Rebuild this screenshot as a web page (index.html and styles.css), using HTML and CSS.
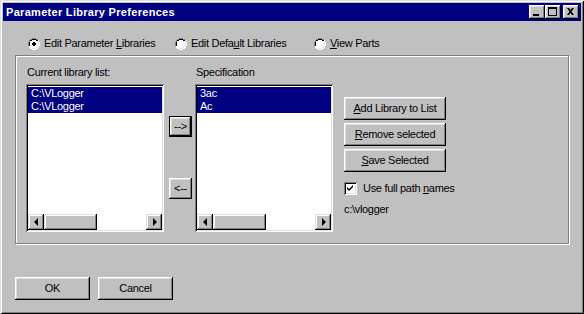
FILE: index.html
```html
<!DOCTYPE html>
<html>
<head>
<meta charset="utf-8">
<link rel="stylesheet" href="styles.css">
</head>
<body>
<div class="window">
  <div class="titlebar">
    <span class="title">Parameter Library Preferences</span>
    <div class="controls">
      <span class="tbtn"><svg width="16" height="14" viewBox="0 0 16 14"><rect x="4" y="9" width="6" height="2" fill="#000"/></svg></span>
      <span class="tbtn"><svg width="16" height="14" viewBox="0 0 16 14"><path d="M3 2h9v9h-9z M4 4v6h7v-6z" fill="#000" fill-rule="evenodd"/></svg></span>
      <span class="tbtn close"><svg width="16" height="14" viewBox="0 0 16 14"><path d="M4 3h2l1.5 2 1.5-2h2l-2.5 3.5 2.5 3.5h-2l-1.5-2-1.5 2h-2l2.5-3.5z" fill="#000"/></svg></span>
    </div>
  </div>

  <div class="radios">
    <label class="radio r1"><span class="rcircle"><svg width="12" height="12" viewBox="0 0 12 12"><path d="M4 0h4v1h2v1h1v2h1v4h-1v2h-1v1h-2v1h-4v-1h-2v-1h-1v-2h-1v-4h1v-2h1v-1h2z" fill="#fff"/><path d="M4 0h4v1h2v1h-2v-1h-4v1h-2v2h-1v4h-1v-4h1v-2h1v-1h2z" fill="#808080"/><path d="M4 1h4v1h2v1h-2v-1h-4v1h-2v1h-0v4h-1v-4h1v-2h2z" fill="#000"/><path d="M4 2h4v1h1v1h1v4h-1v1h-1v1h-4v-1h-1v-1h-1v-4h1v-1h1z" fill="#fff"/><path d="M10 3h1v5h-1v1h-1v1h-1v1h-4v-1h4v-1h1v-1h1z" fill="#dfdfdf"/><path d="M5 4h2v1h1v2h-1v1h-2v-1h-1v-2h1z" fill="#000"/></svg></span><span class="txt">Edit Parameter <u>L</u>ibraries</span></label>
    <label class="radio r2"><span class="rcircle"><svg width="12" height="12" viewBox="0 0 12 12"><path d="M4 0h4v1h2v1h1v2h1v4h-1v2h-1v1h-2v1h-4v-1h-2v-1h-1v-2h-1v-4h1v-2h1v-1h2z" fill="#fff"/><path d="M4 0h4v1h2v1h-2v-1h-4v1h-2v2h-1v4h-1v-4h1v-2h1v-1h2z" fill="#808080"/><path d="M4 1h4v1h2v1h-2v-1h-4v1h-2v1h-0v4h-1v-4h1v-2h2z" fill="#000"/><path d="M4 2h4v1h1v1h1v4h-1v1h-1v1h-4v-1h-1v-1h-1v-4h1v-1h1z" fill="#fff"/><path d="M10 3h1v5h-1v1h-1v1h-1v1h-4v-1h4v-1h1v-1h1z" fill="#dfdfdf"/></svg></span><span class="txt">Edit Defa<u>u</u>lt Libraries</span></label>
    <label class="radio r3"><span class="rcircle"><svg width="12" height="12" viewBox="0 0 12 12"><path d="M4 0h4v1h2v1h1v2h1v4h-1v2h-1v1h-2v1h-4v-1h-2v-1h-1v-2h-1v-4h1v-2h1v-1h2z" fill="#fff"/><path d="M4 0h4v1h2v1h-2v-1h-4v1h-2v2h-1v4h-1v-4h1v-2h1v-1h2z" fill="#808080"/><path d="M4 1h4v1h2v1h-2v-1h-4v1h-2v1h-0v4h-1v-4h1v-2h2z" fill="#000"/><path d="M4 2h4v1h1v1h1v4h-1v1h-1v1h-4v-1h-1v-1h-1v-4h1v-1h1z" fill="#fff"/><path d="M10 3h1v5h-1v1h-1v1h-1v1h-4v-1h4v-1h1v-1h1z" fill="#dfdfdf"/></svg></span><span class="txt"><u>V</u>iew Parts</span></label>
  </div>

  <div class="group">
    <div class="listcol">
      <div class="label">Current library list:</div>
      <div class="listbox">
        <div class="items">
          <div class="item sel">C:\VLogger</div>
          <div class="item sel">C:\VLogger</div>
        </div>
        <div class="hscroll">
          <span class="sbtn"><span class="tri left"></span></span>
          <span class="thumb"></span>
          <span class="track"></span>
          <span class="sbtn"><span class="tri right"></span></span>
        </div>
      </div>
    </div>

    <div class="arrows">
      <button class="btn default arrowbtn">--&gt;</button>
      <button class="btn arrowbtn second">&lt;--</button>
    </div>

    <div class="listcol">
      <div class="label">Specification</div>
      <div class="listbox">
        <div class="items">
          <div class="item sel">3ac</div>
          <div class="item sel">Ac</div>
        </div>
        <div class="hscroll">
          <span class="sbtn"><span class="tri left"></span></span>
          <span class="thumb"></span>
          <span class="track"></span>
          <span class="sbtn"><span class="tri right"></span></span>
        </div>
      </div>
    </div>

    <div class="actions">
      <button class="btn wide"><u>A</u>dd Library to List</button>
      <button class="btn wide"><u>R</u>emove selected</button>
      <button class="btn wide"><u>S</u>ave Selected</button>
      <label class="check"><span class="cbox"><svg width="7" height="7" viewBox="0 0 7 7"><path d="M6 0v2l-4 4-2-2v-2l2 2 4-4z" fill="#000"/></svg></span><span class="txt">Use full path <u>n</u>ames</span></label>
      <div class="path">c:\vlogger</div>
    </div>
  </div>

  <div class="footer">
    <button class="btn foot">OK</button>
    <button class="btn foot">Cancel</button>
  </div>
</div>
</body>
</html>
```

FILE: styles.css
```css
* { box-sizing: border-box; }
html, body { margin: 0; padding: 0; }
body {
  width: 584px;
  height: 314px;
  background: #c0c0c0;
  font-family: "Liberation Sans", Arial, sans-serif;
  font-size: 11px;
  letter-spacing: -0.3px;
  color: #000;
  overflow: hidden;
}
.window {
  width: 584px;
  height: 314px;
  padding: 3px;
  background: #c0c0c0;
  box-shadow: inset 1px 1px #dfdfdf, inset -1px -1px #000, inset 2px 2px #fff, inset -2px -2px #808080;
  display: flex;
  flex-direction: column;
}
.titlebar {
  height: 18px;
  background: #000080;
  display: flex;
  align-items: center;
  justify-content: space-between;
  padding: 0 2px 0 3px;
}
.title {
  color: #fff;
  font-weight: bold;
  font-size: 11px;
  letter-spacing: 0.3px;
  line-height: 13px;
}
.controls { display: flex; align-items: center; }
.tbtn {
  width: 16px;
  height: 14px;
  background: #c0c0c0;
  box-shadow: inset -1px -1px #000, inset 1px 1px #fff, inset -2px -2px #808080, inset 2px 2px #dfdfdf;
  display: block;
}
.tbtn svg { display: block; }
.tbtn.close { margin-left: 2px; }

.radios {
  display: flex;
  padding: 16px 0 0 25px;
  height: 34px;
}
.radio {
  display: flex;
  align-items: center;
  height: 13px;
  line-height: 13px;
  white-space: nowrap;
}
.r1 { width: 147px; }
.r2 { width: 139px; }
.rcircle { width: 12px; height: 12px; margin-right: 4px; display: block; }
.rcircle svg { display: block; }

.group {
  margin: 0 12px;
  height: 189px;
  border: 1px solid #808080;
  box-shadow: inset 1px 1px #fff, 1px 1px #fff;
  padding: 10px 0 0 10px;
  display: flex;
  align-items: flex-start;
}
.listcol { display: flex; flex-direction: column; }
.label { line-height: 13px; height: 13px; padding-left: 1px; margin-bottom: 5px; }
.listbox {
  width: 138px;
  height: 148px;
  background: #fff;
  padding: 2px;
  box-shadow: inset 1px 1px #808080, inset -1px -1px #fff, inset 2px 2px #000, inset -2px -2px #dfdfdf;
  display: flex;
  flex-direction: column;
}
.items { flex: 1; padding-top: 1px; }
.item { height: 13px; line-height: 13px; padding-left: 3px; white-space: nowrap; }
.item.sel { background: #000080; color: #fff; }

.hscroll { height: 16px; display: flex; }
.sbtn, .thumb {
  height: 16px;
  background: #c0c0c0;
  box-shadow: inset -1px -1px #000, inset 1px 1px #dfdfdf, inset -2px -2px #808080, inset 2px 2px #fff;
}
.sbtn { width: 16px; display: flex; align-items: center; justify-content: center; }
.thumb { width: 53px; }
.track { flex: 1; background: #fff; }
.tri { width: 0; height: 0; border-top: 4px solid transparent; border-bottom: 4px solid transparent; }
.tri.left { border-right: 4px solid #000; margin-left: -1px; }
.tri.right { border-left: 4px solid #000; margin-left: 1px; }

.arrows {
  display: flex;
  flex-direction: column;
  margin: 50px 3px 0 5px;
}
.btn {
  font-family: "Liberation Sans", Arial, sans-serif;
  font-size: 11px;
  letter-spacing: -0.3px;
  color: #000;
  background: #c0c0c0;
  border: none;
  padding: 0;
  margin: 0;
  box-shadow: inset -1px -1px #000, inset 1px 1px #fff, inset -2px -2px #808080, inset 2px 2px #dfdfdf;
  display: block;
  text-align: center;
  line-height: 13px;
}
.btn.default {
  box-shadow: inset 0 0 0 1px #000, inset -2px -2px #000, inset 2px 2px #fff, inset -3px -3px #808080, inset 3px 3px #dfdfdf;
}
.arrowbtn { width: 23px; height: 21px; }
.arrowbtn.second { margin-top: 41px; }

.actions {
  display: flex;
  flex-direction: column;
  margin: 31px 0 0 11px;
}
.wide { width: 102px; height: 23px; margin-bottom: 3px; }
.check {
  display: flex;
  align-items: center;
  height: 13px;
  line-height: 13px;
  margin-top: 7px;
  white-space: nowrap;
}
.cbox {
  width: 13px;
  height: 13px;
  margin-right: 6px;
  background: #fff;
  box-shadow: inset 1px 1px #808080, inset -1px -1px #fff, inset 2px 2px #000, inset -2px -2px #dfdfdf;
  display: flex;
  align-items: center;
  justify-content: center;
}
.cbox svg { display: block; }
.path { margin-top: 8px; line-height: 13px; }

.footer {
  display: flex;
  gap: 8px;
  padding: 33px 0 0 12px;
}
.foot { width: 75px; height: 23px; }
```
